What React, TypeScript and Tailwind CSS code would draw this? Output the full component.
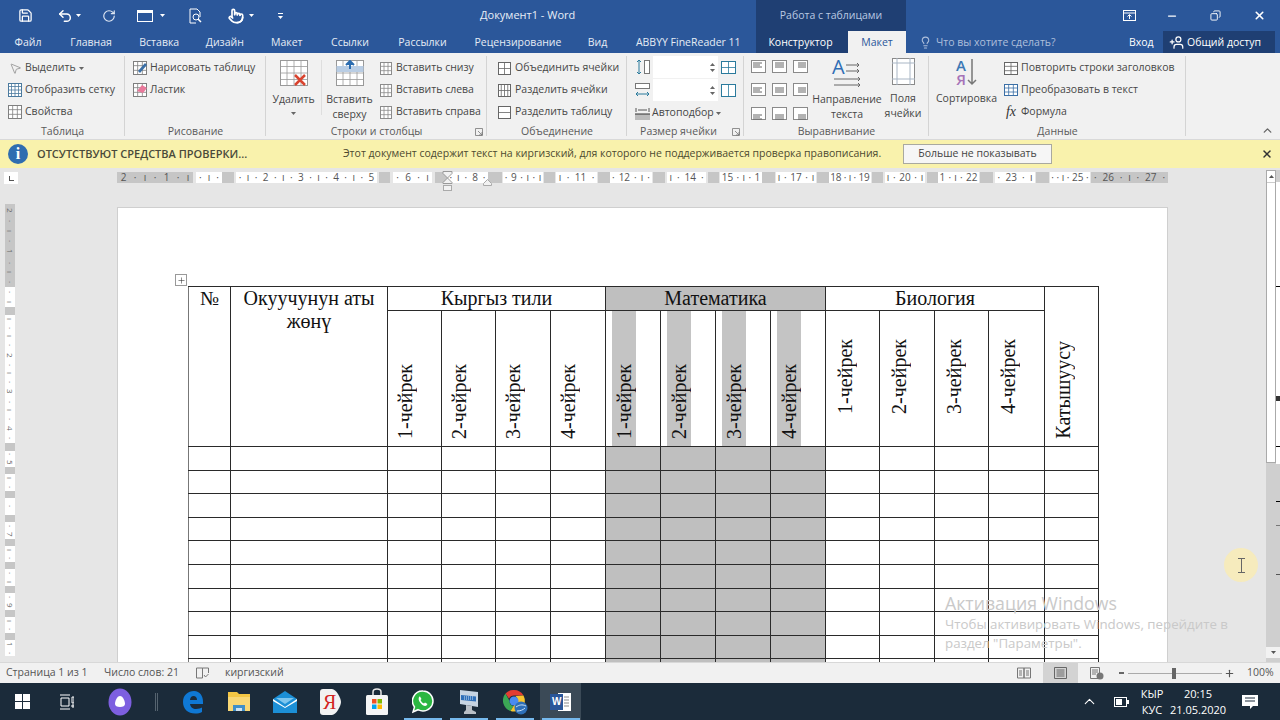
import { Copy, Lightbulb, Minus, MousePointer2, Plus, Pointer, RotateCcw, Save, Undo2, UserPlus, X, ChevronUp } from "lucide-react";
import type { ReactNode } from "react";

// little table glyph used all over the ribbon
const Grid = ({ w = 14, h = 14, cols = 3, rows = 3, color = "#7f7f7f", children }: { w?: number; h?: number; cols?: number; rows?: number; color?: string; children?: ReactNode }) => (
  <svg width={w} height={h} viewBox={`0 0 ${w} ${h}`} className="shrink-0">
    <rect x="0.5" y="0.5" width={w - 1} height={h - 1} fill="#fff" stroke={color} />
    {Array.from({ length: cols - 1 }).map((_, i) => (
      <line key={i} x1={((i + 1) * w) / cols} x2={((i + 1) * w) / cols} y1="0" y2={h} stroke={color} strokeWidth="0.8" />
    ))}
    {Array.from({ length: rows - 1 }).map((_, i) => (
      <line key={i} y1={((i + 1) * h) / rows} y2={((i + 1) * h) / rows} x1="0" x2={w} stroke={color} strokeWidth="0.8" />
    ))}
    {children}
  </svg>
);

const Caret = ({ color = "#666" }: { color?: string }) => (
  <svg width="5" height="3" viewBox="0 0 5 3" className="shrink-0">
    <path d="M0 0h5L2.5 3z" fill={color} />
  </svg>
);

const Row = ({ icon, children, caret, iconW = 14, gap = 3 }: { icon: ReactNode; children: ReactNode; caret?: boolean; iconW?: number; gap?: number }) => (
  <div className="flex h-[22px] items-center whitespace-nowrap" style={{ gap }}>
    <div className="flex shrink-0 items-center justify-center" style={{ width: iconW }}>
      {icon}
    </div>
    <span>{children}</span>
    {caret && <Caret />}
  </div>
);

const Group = ({ w, label, children, labelOffset = "" }: { w: number; label: string; children: ReactNode; labelOffset?: string }) => (
  <div className="relative flex h-full shrink-0 flex-col" style={{ width: w }}>
    <div className="h-[71px] pt-[4px]">{children}</div>
    <div className={`flex h-[15px] items-center justify-center pt-[1px] text-[#5a5a5a] ${labelOffset}`}>{label}</div>
    <div className="absolute top-[3px] right-0 bottom-[3px] w-px bg-[#d4d4d4]" />
  </div>
);

const Launcher = () => (
  <svg width="8" height="8" viewBox="0 0 8 8" className="absolute right-[4px] bottom-[3px]">
    <path d="M0.5 0.5h7v7h-7z M3 3l4 4 M7 4v3H4" fill="none" stroke="#777" strokeWidth="0.8" />
  </svg>
);

const AlignIcon = ({ y, x }: { y: number; x: number }) => (
  <svg width="15" height="13" viewBox="0 0 15 13" className="shrink-0">
    <rect x="0.5" y="0.5" width="14" height="12" fill="#fff" stroke="#8a8a8a" />
    {[0, 1, 2].map((i) => (
      <line key={i} x1={x === 0 ? 2 : x === 1 ? 3 : 5} x2={x === 0 ? (i === 1 ? 9 : 11) : x === 1 ? 12 : 13} y1={y + i * 2} y2={y + i * 2} stroke="#666" />
    ))}
  </svg>
);

const Spin = () => (
  <div className="flex h-[22px] w-[65px] flex-col items-end justify-center gap-[3px] bg-white pr-[3px]">
    <svg width="5" height="3" viewBox="0 0 5 3"><path d="M0 3h5L2.5 0z" fill="#666" /></svg>
    <svg width="5" height="3" viewBox="0 0 5 3"><path d="M0 0h5L2.5 3z" fill="#666" /></svg>
  </div>
);

const tabs: [string, number][] = [
  ["Файл", 56],
  ["Главная", 70],
  ["Вставка", 66.5],
  ["Дизайн", 64.5],
  ["Макет", 59.5],
  ["Ссылки", 67],
  ["Рассылки", 78],
  ["Рецензирование", 113],
  ["Вид", 46],
  ["ABBYY FineReader 11", 135.5],
];

// x0, x1, grey, label
const rulerSegs: [number, number, boolean, string][] = [
  [117, 193, true, "2 · ı · 1 · ı"],
  [196, 222, false, "· ı ·"],
  [222, 234, true, ""],
  [236, 377, false, "· ı · 2 · ı · 3 · ı · 4 · ı · 5"],
  [379, 390, true, ""],
  [393, 432, false, "· 6 · ı"],
  [435, 447, true, ""],
  [447, 488, false, "· ı · 8 ·"],
  [488, 502, true, ""],
  [503, 543, false, "· 9 · ı · ı"],
  [544, 555, true, ""],
  [556, 597, false, "ı · 11 ·"],
  [598, 610, true, ""],
  [610, 652, false, "· 12 · ı ·"],
  [653, 665, true, ""],
  [667, 706, false, "ı · 14 ·"],
  [708, 719, true, ""],
  [720, 762, false, "15 · ı · 1"],
  [762, 775, true, ""],
  [776, 816, false, "ı · 17 · ı"],
  [817, 829, true, ""],
  [829, 871, false, "18 · ı · 19"],
  [872, 883, true, ""],
  [885, 925, false, "ı · 20 · ı"],
  [927, 938, true, ""],
  [938, 979, false, "1 · ı · 22"],
  [980, 993, true, ""],
  [995, 1035, false, "· 23 · ı"],
  [1036, 1049, true, ""],
  [1050, 1090, false, "· · ı · 25 ·"],
  [1091, 1168, true, "· 26 · ı · 27 ·"],
];

const vRuler: [number, boolean, string][] = [
  [83, true, "2 · ı · 1 · ı ·"],
  [20, false, "· ı"],
  [8, true, ""],
  [128, false, "ı · ı · 2 · ı · 3 · ı · 4 ·"],
  [8, true, ""],
  [16, false, "· 5"],
  [7, true, ""],
  [17, false, "ı ·"],
  [7, true, ""],
  [17, false, "·"],
  [7, true, ""],
  [17, false, "· 7"],
  [7, true, ""],
  [16, false, "ı ·"],
  [7, true, ""],
  [17, false, "· ı"],
  [7, true, ""],
  [17, false, "· 9"],
  [7, true, ""],
  [16, false, "ı ·"],
  [7, true, ""],
  [16, false, "1 ·"],
];

const colWidths = [42, 157, 54, 54, 55, 55, 55, 55, 55, 55, 54, 55, 54, 56, 54];

const quarters = ["1-чейрек", "2-чейрек", "3-чейрек", "4-чейрек"];

const cell = "border border-[#2a2a2a] p-0";

const VText = ({ children, className = "" }: { children: ReactNode; className?: string }) => (
  <span className={`rotate-180 whitespace-nowrap leading-[22px] [writing-mode:vertical-rl] ${className}`}>{children}</span>
);

const Table = () => (
  <table className="table-fixed border-collapse font-['Liberation_Serif',serif] text-[20px] leading-[23px] text-[#111]" style={{ width: 911 }}>
    <colgroup>
      {colWidths.map((w, i) => (
        <col key={i} style={{ width: w }} />
      ))}
    </colgroup>
    <tbody>
      <tr className="h-[23px]">
        <td rowSpan={2} className={`${cell} border-l-[#777] text-center align-top`}>№</td>
        <td rowSpan={2} className={`${cell} text-center align-top`}>
          Окуучунун аты
          <br />
          жөнү
        </td>
        <td colSpan={4} className={`${cell} text-center`}>Кыргыз тили</td>
        <td colSpan={4} className={`${cell} bg-[#bfbfbf] text-center`}>Математика</td>
        <td colSpan={4} className={`${cell} text-center`}>Биология</td>
        <td rowSpan={2} className={`${cell} align-bottom`}>
          <div className="flex h-[159px] items-end pb-[7px] pl-[7px]">
            <VText>Катышуусу</VText>
          </div>
        </td>
      </tr>
      <tr className="h-[136px]">
        {quarters.map((q) => (
          <td key={q} className={cell}>
            <div className="flex h-[135px] items-end pb-[7px] pl-[6px]">
              <VText>{q}</VText>
            </div>
          </td>
        ))}
        {quarters.map((q) => (
          <td key={"m" + q} className={cell}>
            <div className="flex h-[135px] pl-[6px]">
              <div className="flex h-full w-[24px] items-end justify-center bg-[#c4c4c4] pb-[7px]">
                <VText>{q}</VText>
              </div>
            </div>
          </td>
        ))}
        {quarters.map((q) => (
          <td key={"b" + q} className={cell}>
            <div className="flex h-[135px] items-end pb-[32px] pl-[8px]">
              <VText>{q}</VText>
            </div>
          </td>
        ))}
      </tr>
      {Array.from({ length: 10 }).map((_, r) => (
        <tr key={r} className="h-[23.6px]">
          {colWidths.map((_, c) => (
            <td key={c} className={`${cell} ${c >= 6 && c <= 9 ? "bg-[#bfbfbf]" : ""} ${c === 0 ? "border-l-[#777]" : ""}`} />
          ))}
        </tr>
      ))}
    </tbody>
  </table>
);

const AliceIcon = () => (
  <svg width="24" height="28" viewBox="0 0 24 28">
    <ellipse cx="12" cy="14" rx="11.5" ry="13.5" fill="#7d5fe0" />
    <path d="M12 8c3 0 5 5 5 8 0 2-2 3-5 3s-5-1-5-3c0-3 2-8 5-8z" fill="#fff" />
  </svg>
);

const taskIcons: ReactNode[] = [
  <svg key="e" width="22" height="24" viewBox="0 0 22 24">
    <path d="M1 12C1 5 6 1 12 1c6 0 9 5 9 11v2H8c.3 3 3 5 6 5 2.500 0 5-.8 6-1.500v4.500c-2 1-4 1.500-7 1.500C6 23.500 1 19 1 12zm7-2h7c0-2.500-1.500-4-3.500-4S8.300 7.500 8 10z" fill="#0f78d4" />
  </svg>,
  <svg key="f" width="24" height="21" viewBox="0 0 24 21">
    <path d="M1 1h9l2 2h11v17H1z" fill="#f3c644" />
    <path d="M1 6h22v14H1z" fill="#f8d775" />
    <path d="M6 14h12v6H6z" fill="#3f8fc9" />
    <path d="M9 17h6v3H9z" fill="#cfe3f2" />
  </svg>,
  <svg key="m" width="24" height="22" viewBox="0 0 24 22">
    <path d="M0 8 12 0l12 8v14H0z" fill="#1c8fd6" />
    <path d="M0 8l12 8 12-8v2l-12 7L0 10z" fill="#fff" />
    <path d="M3 7h18l-9 6z" fill="#7fc6ee" />
  </svg>,
  <svg key="y" width="22" height="26" viewBox="0 0 22 26">
    <path d="M3 0h9c4 0 9 9 9 13s-5 13-9 13H3c-2 0-3-1-3-3V3c0-2 1-3 3-3z" fill="#f2f2f2" />
    <text x="3" y="20" fontFamily="'Liberation Serif',serif" fontSize="20" fill="#d3231f">Я</text>
  </svg>,
  <svg key="s" width="24" height="28" viewBox="0 0 24 28">
    <path d="M8 7V4c0-4 8-4 8 0v3" fill="none" stroke="#e8e8e8" strokeWidth="1.500" />
    <rect x="1" y="7" width="22" height="20" rx="1.500" fill="#f5f5f5" />
    <rect x="7" y="11" width="4.500" height="4.500" fill="#f25022" />
    <rect x="12.500" y="11" width="4.500" height="4.500" fill="#7fba00" />
    <rect x="7" y="16.500" width="4.500" height="4.500" fill="#00a4ef" />
    <rect x="12.500" y="16.500" width="4.500" height="4.500" fill="#ffb900" />
  </svg>,
  <svg key="w" width="22" height="24" viewBox="0 0 22 24">
    <path d="M11 1a10 10 0 0 1 0 20c-2 0-3.500-.5-5-1.300L1 22l1.500-5A10 10 0 0 1 11 1z" fill="#2bb741" stroke="#fff" strokeWidth="1.500" />
    <path d="M7.500 6.500c-1.500 1.500-1 4 1 6.500s4.500 3.500 6 2.500l1-1.500-2.500-1.500-1 1c-1.500-.5-3-2-3.500-3.500l1-1-1.500-2.500z" fill="#fff" />
  </svg>,
  <svg key="p" width="22" height="26" viewBox="0 0 22 26">
    <path d="M2 1l18 2v15L2 15z" fill="#c7d4e2" />
    <path d="M3 6l15 1.500v5L3 11z" fill="#2f6fb8" />
    <path d="M6 8h9M6 10h9" stroke="#cfe3f6" strokeDasharray="1 1" />
    <path d="M8 16l6 1v4l4 2v2H6v-2l2-2z" fill="#b9bfc6" />
  </svg>,
  <svg key="c" width="26" height="26" viewBox="0 0 26 26">
    <path d="M12 1a11 11 0 0 1 9.500 5.500H12a5.500 5.500 0 0 0-5 3.200L3.500 4.500A11 11 0 0 1 12 1z" fill="#e23d32" />
    <path d="M3.500 4.500 7.500 12a5 5 0 0 0 4 5l-3 5A11 11 0 0 1 3.500 4.500z" fill="#3ba755" />
    <path d="M21.500 6.500a11 11 0 0 1-13 15.500l4-6.500 3-3c.5-2-.5-4-2-5.500z" fill="#f7c52e" />
    <circle cx="12" cy="12" r="4.500" fill="#4a8bf0" />
    <circle cx="19" cy="19" r="6.500" fill="#2e6fb8" />
    <path d="M14 18c3-2 6-3 10-1M15 22c3 0 6-1 8-3" stroke="#cfe3f6" fill="none" />
  </svg>,
  <div key="word" className="relative flex">
    <svg width="22" height="22" viewBox="0 0 22 22">
      <rect x="8" y="2" width="13" height="18" fill="#fff" />
      <path d="M14 6h5M14 9h5M14 12h5M14 15h5" stroke="#8b8b8b" />
      <rect x="0" y="3" width="13" height="16" fill="#2a5699" />
    </svg>
    <span className="absolute top-[5px] left-[2px] font-['Liberation_Sans',sans-serif] text-[10px] leading-[12px] font-bold text-white">W</span>
  </div>,
];

export default function App() {
  return (
    <div className="relative h-[720px] w-[1280px] overflow-hidden bg-[#e6e6e6] font-['Open_Sans',sans-serif] text-[10.500px] text-[#474747]">
      {/* title bar */}
      <div className="flex h-[31px] bg-[#2b579a] text-white">
        <div className="flex w-[756px] items-center">
          <Save size={15} className="ml-[18px]" strokeWidth={2} />
          <Undo2 size={16} className="ml-[24px]" strokeWidth={2.200} />
          <span className="ml-[3px]"><Caret color="#fff" /></span>
          <RotateCcw size={14} className="ml-[21px] -scale-x-100 text-[#dfe7f3]" strokeWidth={2} />
          <div className="ml-[21px] h-[12px] w-[16px] border border-t-[3px] border-white" />
          <span className="ml-[7px]"><Caret color="#fff" /></span>
          <svg width="15" height="16" viewBox="0 0 15 16" className="ml-[23px]">
            <path d="M2 1h7l3 3v5M2 1v14h6" fill="none" stroke="#fff" />
            <circle cx="8" cy="9" r="3" fill="none" stroke="#fff" />
            <path d="m10 11 3 3" stroke="#fff" strokeWidth="1.500" />
          </svg>
          <Pointer size={16} className="ml-[25px]" strokeWidth={2.500} />
          <span className="ml-[5px]"><Caret color="#fff" /></span>
          <div className="ml-[24px] flex flex-col items-center gap-[2px]">
            <div className="h-px w-[5px] bg-white" />
            <Caret color="#fff" />
          </div>
          <span className="ml-[197px] whitespace-nowrap text-[11px] text-[#e8eef7]">Документ1 - Word</span>
        </div>
        <div className="flex w-[150px] items-center justify-center whitespace-nowrap bg-[#1f3f73] text-[#b9c9e2]">Работа с таблицами</div>
        <div className="flex flex-1 items-center">
          <svg width="13" height="11" viewBox="0 0 13 11" className="ml-[217px]">
            <rect x="0.500" y="0.500" width="12" height="10" fill="none" stroke="#fff" />
            <path d="M0 3h13M6.500 9V5M4.500 6.500l2-2 2 2" fill="none" stroke="#fff" />
          </svg>
          <Minus size={12} className="ml-[30px]" strokeWidth={2.500} />
          <Copy size={11} className="ml-[32px] -scale-x-100" strokeWidth={2} />
          <X size={13} className="ml-[32px]" strokeWidth={3} />
        </div>
      </div>
      {/* tabs */}
      <div className="flex h-[22px] bg-[#2b579a] pt-px text-[#e6ecf5]">
        {tabs.map(([t, w]) => (
          <div key={t} className="flex shrink-0 items-center justify-center whitespace-nowrap" style={{ width: w }}>
            {t}
          </div>
        ))}
        <div className="-mt-px flex w-[92px] items-center justify-center bg-[#1f3f73] pt-px pr-[3px] text-white">Конструктор</div>
        <div className="-mt-px flex w-[58px] items-center justify-center bg-[#f1f1f1] pt-px text-[#2b579a]">Макет</div>
        <div className="-mt-px flex flex-1 items-center pt-px">
          <Lightbulb size={13} className="ml-[13px] text-[#aebfdb]" />
          <span className="ml-[4px] w-[193px] whitespace-nowrap text-[#aebfdb]">Что вы хотите сделать?</span>
          <span className="w-[34px] text-white">Вход</span>
          <div className="-mt-px flex h-[22px] w-[112px] items-center bg-[#1f3f73] pt-px pl-[6px] text-white">
            <UserPlus size={15} className="-scale-x-100" />
            <span className="ml-[3px] whitespace-nowrap">Общий доступ</span>
          </div>
        </div>
      </div>

      {/* ribbon */}
      <div className="relative flex h-[87px] border-b border-[#d9d9d9] bg-[#f1f1f1]">
        <Group w={125} label="Таблица">
          <div className="pl-[8px]">
            <Row icon={<MousePointer2 size={13} strokeWidth={1.200} className="text-[#777]" />} caret>Выделить</Row>
            <Row icon={<Grid cols={4} rows={4} color="#4b7a9e" />}>Отобразить сетку</Row>
            <Row icon={<Grid cols={3} rows={3} />}>Свойства</Row>
          </div>
        </Group>
        <Group w={141} label="Рисование">
          <div className="pl-[8px]">
            <Row icon={<Grid><path d="M5 10 12 2l2 2-7 8z" fill="#3b6fa6" /></Grid>}>Нарисовать таблицу</Row>
            <Row icon={<Grid><path d="M4 8l5-6 5 3-4 5z" fill="#e9799b" /></Grid>}>Ластик</Row>
          </div>
        </Group>
        <Group w={221} label="Строки и столбцы">
          <div className="flex">
            <div className="flex w-[55px] flex-col items-center pt-[3px]">
              <Grid w={28} h={26} cols={4} rows={4} color="#999">
                <path d="M15 15l10 10M25 15 15 25" stroke="#d9442f" strokeWidth="2.500" />
              </Grid>
              <span className="mt-[6px] leading-[15px]">Удалить</span>
              <span className="mt-[5px]"><Caret /></span>
            </div>
            <div className="mt-[3px] h-[55px] w-px bg-[#dedede]" />
            <div className="flex w-[55px] flex-col items-center pt-[3px]">
              <Grid w={28} h={26} cols={4} rows={4} color="#999">
                <rect x="0.500" y="6" width="27" height="6" fill="#b9cde4" />
                <path d="M14 1v8M10 5l4-4 4 4" stroke="#2b6cb0" strokeWidth="2" fill="#2b6cb0" />
              </Grid>
              <span className="mt-[6px] text-center leading-[15px]">Вставить<br />сверху</span>
            </div>
            <div className="pl-[3px]">
              <Row iconW={12} icon={<Grid w={12} h={13} color="#8c8c8c" />} gap={4}>Вставить снизу</Row>
              <Row iconW={12} icon={<Grid w={12} h={13} color="#8c8c8c" />} gap={4}>Вставить слева</Row>
              <Row iconW={12} icon={<Grid w={12} h={13} color="#8c8c8c" />} gap={4}>Вставить справа</Row>
            </div>
          </div>
          <Launcher />
        </Group>
        <Group w={140} label="Объединение">
          <div className="pl-[10px]">
            <Row icon={<Grid w={13} h={13} cols={2} rows={2} color="#666" />} gap={4}>Объединить ячейки</Row>
            <Row icon={<Grid w={13} h={13} cols={4} rows={2} color="#666" />} gap={4}>Разделить ячейки</Row>
            <Row icon={<Grid w={13} h={13} cols={1} rows={2} color="#666" />} gap={4}>Разделить таблицу</Row>
          </div>
        </Group>
        <Group w={117} label="Размер ячейки" labelOffset="pr-[14px]">
          <div className="-mt-px pl-[8px]">
            <div className="flex items-center">
              <svg width="15" height="16" viewBox="0 0 15 16" className="shrink-0">
                <path d="M4 1v14M2 3l2-2 2 2M2 13l2 2 2-2" fill="none" stroke="#2a7a9c" />
                <rect x="9.500" y="1.500" width="5" height="13" fill="#fff" stroke="#777" />
              </svg>
              <span className="ml-[3px]"><Spin /></span>
              <span className="ml-[3px]">
                <Grid w={15} h={13} cols={2} rows={2} color="#2a7a9c" />
              </span>
            </div>
            <div className="mt-px flex items-center">
              <svg width="15" height="16" viewBox="0 0 15 16" className="shrink-0">
                <rect x="0.500" y="1.500" width="14" height="5" fill="#fff" stroke="#777" />
                <path d="M1 12h13M3 10l-2 2 2 2M12 10l2 2-2 2" fill="none" stroke="#2a7a9c" />
              </svg>
              <span className="ml-[3px]"><Spin /></span>
              <span className="ml-[3px]">
                <Grid w={15} h={13} cols={2} rows={1} color="#2a7a9c" />
              </span>
            </div>
            <div className="mt-px flex h-[22px] items-center gap-[2px] whitespace-nowrap">
              <svg width="15" height="13" viewBox="0 0 15 13" className="shrink-0">
                <path d="M1 1v4M14 1v4M3 3h9" stroke="#555" />
                <path d="M0 7h15v6H0z" fill="#bbb" />
                <path d="M0 7h15" stroke="#333" />
              </svg>
              <span>Автоподбор</span>
              <Caret />
            </div>
          </div>
          <Launcher />
        </Group>
        <Group w={185} label="Выравнивание">
          <div className="flex">
            <div className="mt-[3px] ml-[7px] grid shrink-0 grid-cols-3 gap-x-[6px] gap-y-[8px]">
              {[3, 5, 8].map((y) => [0, 1, 2].map((x) => <AlignIcon key={`${y}${x}`} y={y} x={x} />))}
            </div>
            <div className="ml-[6px] flex w-[66px] shrink-0 flex-col items-center">
              <div className="flex w-[30px] items-end">
                <span className="text-[20px] leading-[20px] text-[#2f6db5]">A</span>
                <svg width="15" height="14" viewBox="0 0 15 14" className="mb-[1px]">
                  <path d="M1 3h13M1 9h13M12 1l2 2-2 2M12 7l2 2-2 2" fill="none" stroke="#666" />
                </svg>
              </div>
              <svg width="30" height="11" viewBox="0 0 30 11">
                <path d="M2 2h26M2 8h26M26 0l2 2-2 2M26 6l2 2-2 2" fill="none" stroke="#666" />
              </svg>
              <span className="mt-[4px] whitespace-nowrap text-center leading-[15px]">Направление<br />текста</span>
            </div>
            <div className="ml-[1px] flex w-[44px] shrink-0 flex-col items-center">
              <svg width="23" height="27" viewBox="0 0 23 27" className="mt-[1px]">
                <rect x="0.500" y="0.500" width="22" height="26" fill="#fff" stroke="#8a8a8a" />
                <path d="M5 0v27M18 0v27M0 5h23M0 21h23" stroke="#a9b6c5" />
              </svg>
              <span className="mt-[6px] text-center leading-[15px]">Поля<br />ячейки</span>
            </div>
          </div>
        </Group>
        <Group w={257} label="Данные">
          <div className="flex">
            <div className="flex w-[75px] flex-col items-center">
              <div className="flex h-[30px] items-center">
                <div className="flex flex-col items-center text-[15px] leading-[14px] font-semibold">
                  <span className="text-[#3c78b5]">A</span>
                  <span className="text-[#a673b8]">Я</span>
                </div>
                <svg width="10" height="28" viewBox="0 0 10 28" className="ml-px">
                  <path d="M5 1v25M1 22l4 4 4-4" fill="none" stroke="#777" strokeWidth="1.500" />
                </svg>
              </div>
              <span className="mt-[4px] leading-[15px]">Сортировка</span>
            </div>
            <div>
              <Row icon={<Grid w={14} h={13} cols={2} rows={3} color="#666" />}>Повторить строки заголовков</Row>
              <Row icon={<Grid w={14} h={12} cols={3} rows={3} color="#3b6fa6" />}>Преобразовать в текст</Row>
              <Row icon={<span className="font-['Liberation_Serif',serif] text-[14px] leading-[16px] italic text-[#333]">fx</span>}>Формула</Row>
            </div>
          </div>
        </Group>
        <ChevronUp size={13} className="absolute right-[6px] bottom-[2px] text-[#666]" strokeWidth={2.500} />
      </div>

      {/* missing proofing tools bar */}
      <div className="flex h-[28px] items-center bg-[#f9f2ac] text-[#4d4a30]">
        <div className="ml-[8px] flex h-[20px] w-[20px] items-center justify-center rounded-full bg-[#2f6db0] font-['Liberation_Serif',serif] text-[16px] font-bold text-white">i</div>
        <span className="ml-[9px] w-[306px] shrink-0 whitespace-nowrap text-[11px] font-semibold text-[#4a4a3a]">ОТСУТСТВУЮТ СРЕДСТВА ПРОВЕРКИ...</span>
        <span className="whitespace-nowrap">Этот документ содержит текст на киргизский, для которого не поддерживается проверка правописания.</span>
        <div className="ml-auto flex h-[20px] w-[149px] items-center justify-center border border-[#a9a9a0] bg-[#f6f6f6] text-[#444]">Больше не показывать</div>
        <X size={12} className="mr-[7px] ml-[209px] text-[#333]" strokeWidth={3} />
      </div>

      {/* document area */}
      <div className="relative flex h-[494px] overflow-hidden text-[#666]">
        <div className="w-[117px] shrink-0">
          <div className="mt-[4px] ml-[4px] flex h-[12px] w-[14px] items-center justify-center bg-white">
            <div className="h-[5px] w-[5px] border-b border-l border-[#555]" />
          </div>
          <div className="mt-[20px] ml-[5px] flex w-[10px] flex-col">
            {vRuler.map(([h, g, t], i) => (
              <div key={i} className={`flex items-center justify-around whitespace-nowrap text-[8px] leading-[10px] [writing-mode:vertical-rl] ${g ? "bg-[#c6c6c6]" : "bg-white"}`} style={{ height: h }}>
                {t.split(" ").map((p, j) => (
                  <span key={j}>{p}</span>
                ))}
              </div>
            ))}
          </div>
        </div>
        <div className="w-[1051px] shrink-0">
          <div className="relative mt-[4px] flex h-[11px]">
            {rulerSegs.map(([a, b, g, t], i) => (
              <div
                key={i}
                className={`absolute flex h-full items-center justify-around whitespace-nowrap text-[10px] leading-[11px] text-[#555] ${g ? "bg-[#c6c6c6]" : "bg-white"}`}
                style={{ left: a - 117, width: b - a }}
              >
                {t.split(" ").map((p, j) => (
                  <span key={j}>{p}</span>
                ))}
              </div>
            ))}
            <svg width="11" height="22" viewBox="0 0 11 22" className="absolute top-[-1px] left-[325px]">
              <path d="M1 .5h9v2L5.500 7 1 2.500zM5.500 7 10 11.500v1H1v-1z" fill="#f2f2f2" stroke="#999" />
              <rect x="1.500" y="14.500" width="8" height="5" fill="#f2f2f2" stroke="#aaa" />
            </svg>
            <svg width="9" height="7" viewBox="0 0 9 7" className="absolute top-[7px] left-[366px]">
              <path d="M.5 6.500v-2l4-4 4 4v2z" fill="#f2f2f2" stroke="#aaa" />
            </svg>
          </div>
          <div className="relative mt-[24px] h-[520px] border border-[#cfcfcf] bg-white pt-[78px] pl-[70px]">
            <div className="absolute top-[66px] left-[57px] flex h-[12px] w-[12px] items-center justify-center border border-[#999] bg-white">
              <Plus size={9} className="text-[#333]" strokeWidth={1.500} />
            </div>
            <Table />
          </div>
        </div>
        <div className="relative flex-1">
          <div className="absolute top-[2px] bottom-0 left-[98px] w-[14px] bg-[#cfcfcf]" />
          <div className="absolute top-[2px] left-[98px] h-[293px] w-[10px] border border-[#aaa] bg-white">
            <div className="flex h-[12px] items-center justify-center border-b border-[#ccc]">
              <svg width="5" height="3" viewBox="0 0 5 3"><path d="M0 3h5L2.500 0z" fill="#555" /></svg>
            </div>
          </div>
          <div className="absolute top-[14px] left-[108px] h-[282px] w-[4px] bg-white" />
          <div className="absolute top-[118px] left-[108px] h-px w-[4px] bg-black" />
          <div className="absolute top-[228px] left-[108px] h-[5px] w-[4px] bg-[#333]" />
          <div className="absolute top-[278px] left-[108px] h-px w-[4px] bg-black" />
          <div className="absolute top-[333px] left-[108px] h-px w-[4px] bg-black" />
          <div className="absolute top-[357px] left-[108px] h-px w-[4px] bg-[#777]" />
          <div className="absolute top-[406px] left-[108px] h-px w-[4px] bg-[#555]" />
          <div className="absolute top-[479px] left-[98px] flex h-[11px] w-[14px] items-center justify-center bg-[#f2f2f2]">
            <Caret color="#555" />
          </div>
        </div>
        {/* activation watermark and the recorder's cursor highlight */}
        <div className="pointer-events-none absolute top-[424px] left-[945px] whitespace-nowrap text-[#c9c9c9]">
          <div className="text-[17.700px] leading-[22px]">Активация Windows</div>
          <div className="text-[13.300px] leading-[20px]">Чтобы активировать Windows, перейдите в</div>
          <div className="text-[13.300px] leading-[19px]">раздел "Параметры".</div>
        </div>
        <div className="absolute top-[380px] left-[1224px] flex h-[34px] w-[34px] items-center justify-center rounded-full bg-[#f6ebbd]">
          <svg width="7" height="15" viewBox="0 0 7 15">
            <path d="M0 .5h7M0 14.500h7M3.500 .5v14" stroke="#666" />
          </svg>
        </div>
      </div>

      {/* status bar */}
      <div className="flex h-[21px] items-center border-t border-[#d8d8d8] bg-[#f1f1f1] text-[#555]">
        <span className="ml-[6px] w-[98px] shrink-0 whitespace-nowrap">Страница 1 из 1</span>
        <span className="w-[92px] shrink-0 whitespace-nowrap">Число слов: 21</span>
        <svg width="13" height="12" viewBox="0 0 13 12" className="shrink-0">
          <path d="M.5 1h6v10h-6zM6.500 1h6v5M8 8l1.500 2L12.500 7" fill="none" stroke="#777" />
        </svg>
        <span className="ml-[16px] w-[792px] shrink-0 whitespace-nowrap">киргизский</span>
        <svg width="14" height="12" viewBox="0 0 14 12" className="shrink-0">
          <path d="M.5 1h6.500v10H.5zM7 1h6.500v10H7zM2 4h3M2 6h3M2 8h3M9 4h3M9 6h3M9 8h3" fill="none" stroke="#777" />
        </svg>
        <div className="ml-[12px] flex h-full w-[35px] shrink-0 items-center justify-center bg-[#d3d3d3]">
          <svg width="13" height="12" viewBox="0 0 13 12">
            <path d="M.5.5h12v11H.5zM2.500 3h8M2.500 5h8M2.500 7h8M2.500 9h8" fill="none" stroke="#666" />
          </svg>
        </div>
        <svg width="14" height="13" viewBox="0 0 14 13" className="ml-[12px] shrink-0">
          <path d="M.5.5h9v11h-9zM2 3h6M2 5h6M2 7h4" fill="none" stroke="#777" />
          <circle cx="10" cy="9" r="3.500" fill="#777" />
        </svg>
        <div className="ml-[15px] h-[2px] w-[5px] shrink-0 bg-[#666]" />
        <div className="relative ml-[4px] h-px w-[94px] shrink-0 bg-[#aaa]">
          <div className="absolute top-[-5px] left-[44px] h-[11px] w-[4px] bg-[#666]" />
        </div>
        <Plus size={11} className="ml-[2px] shrink-0 text-[#555]" strokeWidth={2.500} />
        <span className="ml-[12px]">100%</span>
      </div>

      {/* taskbar */}
      <div className="relative flex h-[37px] items-center bg-[#1b2b3a] text-white">
        <div className="ml-[15px] grid w-[15px] grid-cols-2 gap-[1px]">
          <div className="h-[7px] bg-white" />
          <div className="h-[7px] bg-white" />
          <div className="h-[7px] bg-white" />
          <div className="h-[7px] bg-white" />
        </div>
        <svg width="14" height="16" viewBox="0 0 14 16" className="ml-[30px]">
          <path d="M0 1h10M0 15h10M1 4h8v8H1zM12 3h2v6h-2zM12 11h2v2h-2z" fill="none" stroke="#fff" />
        </svg>
        <span className="ml-[34px]"><AliceIcon /></span>
        <div className="ml-[23px] h-[18px] w-[3px] border-x border-[#55636f]" />
        <div className="ml-[12px] flex h-full">
          {taskIcons.map((ic, i) => (
            <div key={i} className="relative flex h-full w-[46px] items-center justify-center">
              {i === 8 && <div className="absolute inset-y-0 right-[3px] left-[2px] bg-[#3b4a57]" />}
              <div className="relative flex">{ic}</div>
              {i >= 5 && <div className="absolute right-[4px] bottom-0 left-[4px] h-[2px] bg-[#76b9ed]" />}
            </div>
          ))}
        </div>
        <ChevronUp size={17} className="ml-[497px]" strokeWidth={1.500} />
        <svg width="15" height="10" viewBox="0 0 15 10" className="ml-[16px]">
          <rect x="0.500" y="0.500" width="12" height="9" fill="none" stroke="#fff" />
          <rect x="2" y="2" width="6" height="6" fill="#fff" />
          <rect x="13" y="3" width="2" height="4" fill="#fff" />
        </svg>
        <div className="ml-[11px] flex w-[24px] flex-col items-center text-[11px] leading-[16px]">
          <span>КЫР</span>
          <span>КУС</span>
        </div>
        <div className="ml-[6px] flex w-[56px] flex-col items-center text-[11px] leading-[16px]">
          <span>20:15</span>
          <span>21.05.2020</span>
        </div>
        <svg width="16" height="16" viewBox="0 0 16 16" className="ml-[16px]">
          <path d="M0 1h16v11h-5l-3 3v-3H0z" fill="#fff" />
          <path d="M3 4h10M3 7h10" stroke="#1b2b3a" />
        </svg>
      </div>
    </div>
  );
}
